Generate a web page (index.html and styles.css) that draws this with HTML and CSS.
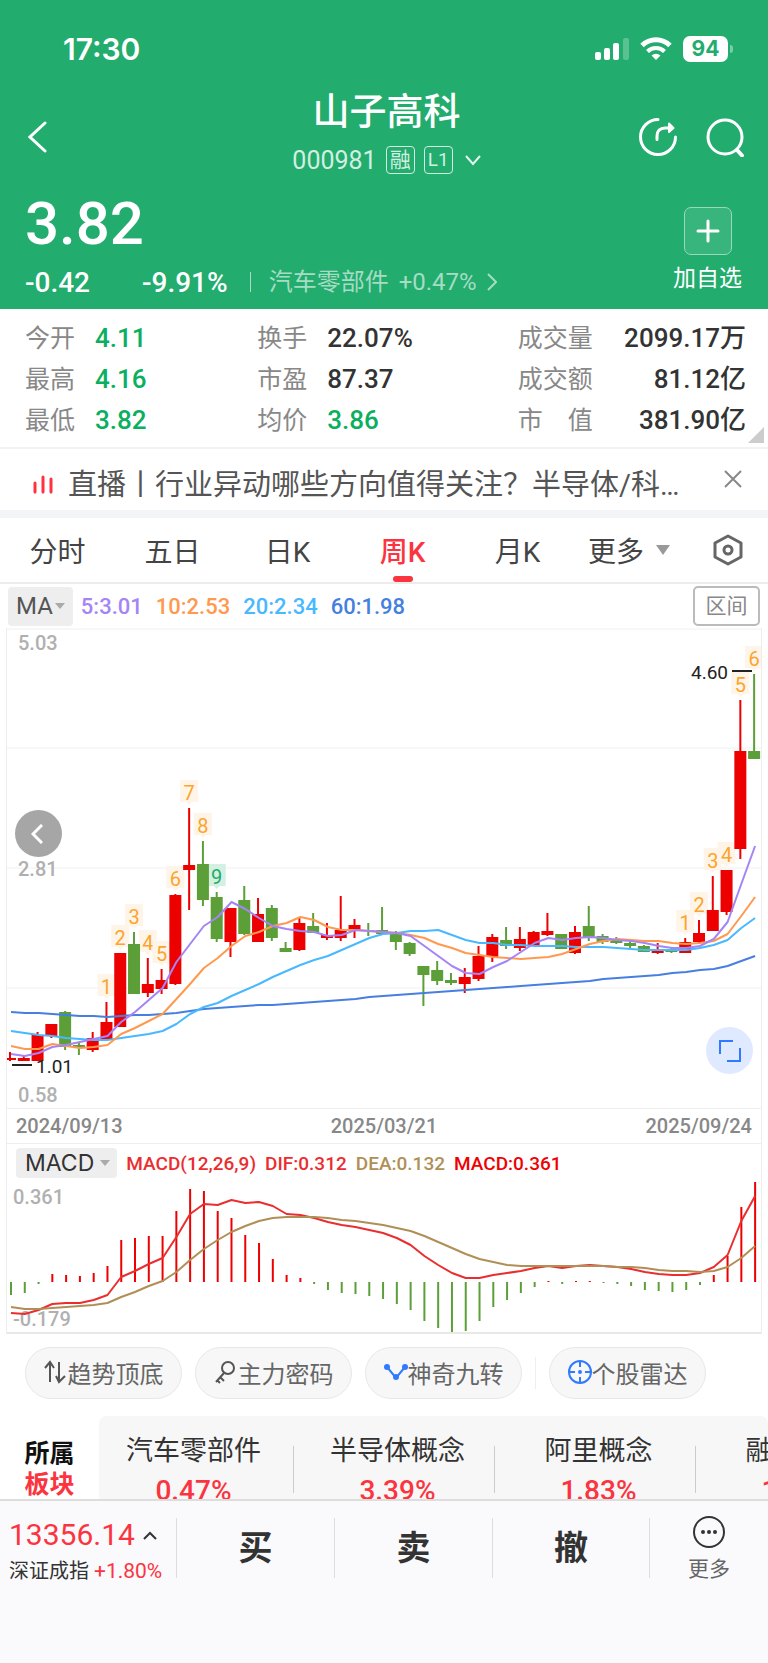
FILE: index.html
```html
<!doctype html>
<html lang="zh-CN">
    <head>
        <title>山子高科 000981</title>
        <meta charset="UTF-8">
        <meta name="viewport" content="width=device-width, initial-scale=1">
        <link rel="stylesheet" href="styles.css">
        <script defer src="chart.js"></script>
    </head>

    <body>
        <!--Header Start-->
        <header class="header">
            <div class="statusbar">
                <span class="clock">17:30</span>
                <div class="status-icons">
                    <svg width="34" height="24" viewBox="0 0 34 24" fill="#fff">
                        <rect x="0" y="15" width="6" height="8" rx="2"/>
                        <rect x="9" y="11" width="6" height="12" rx="2"/>
                        <rect x="18" y="6" width="6" height="17" rx="2"/>
                        <rect x="28" y="1" width="6" height="22" rx="2" opacity="0.25"/>
                    </svg>
                    <svg width="32" height="24" viewBox="0 0 32 24" fill="none" stroke="#fff" stroke-width="5">
                        <path d="M2 8.500a19.800 19.800 0 0 1 28 0"/>
                        <path d="M7.500 14.500a12 12 0 0 1 17 0" stroke-width="4"/>
                        <path d="M11.500 18.500a6.400 6.400 0 0 1 9 0L16 23z" fill="#fff" stroke="none"/>
                    </svg>
                    <div class="battery">94</div>
                </div>
            </div>

            <div class="titlebar">
                <button class="icon-btn back" aria-label="返回">
                    <svg width="20" height="32" viewBox="0 0 20 32" fill="none" stroke="#fff" stroke-width="3" stroke-linecap="round"><path d="M17 2 2 16l15 14"/></svg>
                </button>
                <div class="title">
                    <h1>山子高科</h1>
                    <p class="code">
                        <span>000981</span>
                        <span class="badge">融</span>
                        <span class="badge badge-level">L1</span>
                        <svg width="16" height="11" viewBox="0 0 16 11" fill="none" stroke="#e3f5ec" stroke-width="2"><path d="M1 1l7 8 7-8"/></svg>
                    </p>
                </div>
                <div class="title-actions">
                    <button class="icon-btn" aria-label="分享">
                        <svg width="40" height="40" viewBox="-20 -20 40 40" fill="none" stroke="#fff" stroke-width="3" stroke-linecap="round">
                            <path d="M0-17.500A17.500 17.500 0 1 0 17.500 0"/>
                            <path d="M-1 2.500V-1C-1-6 2-9 7-9h6"/>
                            <path d="M11-13.500 15.500-9 11-5z" fill="#fff" stroke-width="2" stroke-linejoin="round"/>
                        </svg>
                    </button>
                    <button class="icon-btn" aria-label="搜索">
                        <svg width="40" height="40" viewBox="-20 -20 40 40" fill="none" stroke="#fff" stroke-width="3" stroke-linecap="round">
                            <circle r="17"/>
                            <path d="M12 13l5 5.500" stroke-width="4"/>
                        </svg>
                    </button>
                </div>
            </div>

            <div class="quote">
                <div>
                    <div class="price">3.82</div>
                    <div class="change">
                        <span class="diff">-0.42</span>
                        <span>-9.91%</span>
                        <a class="industry" href="#">汽车零部件 <span>+0.47%</span>
                            <svg width="10" height="18" viewBox="0 0 10 18" fill="none" stroke="currentColor" stroke-width="2"><path d="M1 1l8 8-8 8"/></svg>
                        </a>
                    </div>
                </div>
                <button class="add">
                    <span class="plus"><svg width="24" height="24" viewBox="0 0 24 24" stroke="#fff" stroke-width="3" stroke-linecap="round"><path d="M2 12h20M12 2v20"/></svg></span>
                    加自选
                </button>
            </div>
        </header>
        <!--Header End-->

        <!--Stats Start-->
        <section class="stats">
            <dl>
                <dt>今开</dt><dd class="down">4.11</dd>
                <dt>最高</dt><dd class="down">4.16</dd>
                <dt>最低</dt><dd class="down">3.82</dd>
            </dl>
            <dl>
                <dt>换手</dt><dd>22.07%</dd>
                <dt>市盈</dt><dd>87.37</dd>
                <dt>均价</dt><dd class="down">3.86</dd>
            </dl>
            <dl class="wide">
                <dt>成交量</dt><dd>2099.17万</dd>
                <dt>成交额</dt><dd>81.12亿</dd>
                <dt>市　值</dt><dd>381.90亿</dd>
            </dl>
            <span class="corner"></span>
        </section>
        <!--Stats End-->

        <div class="news">
            <svg width="20" height="20" viewBox="0 0 20 20" stroke="#fb3440" stroke-width="3" stroke-linecap="round"><path d="M2 8v9M10 2v15M18 4v13"/></svg>
            <a href="#">直播丨行业异动哪些方向值得关注？半导体/科…</a>
            <button class="icon-btn close" aria-label="关闭">
                <svg width="18" height="18" viewBox="0 0 18 18" stroke="#888" stroke-width="2"><path d="M1 1l16 16M17 1 1 17"/></svg>
            </button>
        </div>

        <!--Tabs Start-->
        <nav class="tabs">
            <button>分时</button>
            <button>五日</button>
            <button>日K</button>
            <button class="active">周K</button>
            <button>月K</button>
            <button class="more">更多<span class="caret"></span></button>
            <button aria-label="设置">
                <svg width="30" height="32" viewBox="0 0 30 32" fill="none" stroke="#666" stroke-width="3" stroke-linejoin="round"><path d="M15 2 28 9v14l-13 7L2 23V9z"/><circle cx="15" cy="16" r="4"/></svg>
            </button>
        </nav>
        <!--Tabs End-->

        <!--Chart Start-->
        <div class="ma">
            <button class="indicator">MA<span class="caret"></span></button>
            <span class="ma5">5:3.01</span>
            <span class="ma10">10:2.53</span>
            <span class="ma20">20:2.34</span>
            <span class="ma60">60:1.98</span>
            <button class="range">区间</button>
        </div>
        <section class="chart">
            <div class="kline">
                <svg id="kline" viewBox="7 0 754 480"></svg>
                <button class="float prev" aria-label="上一页">
                    <svg width="12" height="20" viewBox="0 0 12 20" fill="none" stroke="#fff" stroke-width="3"><path d="M11 1 2 10l9 9"/></svg>
                </button>
                <button class="float full" aria-label="全屏">
                    <svg width="22" height="22" viewBox="0 0 22 22" fill="none" stroke="#2e7bff" stroke-width="2"><path d="M1 14V1h13M21 8v13H8"/></svg>
                </button>
            </div>
            <div class="dates">
                <span>2024/09/13</span>
                <span>2025/03/21</span>
                <span>2025/09/24</span>
            </div>
            <div class="macd-head">
                <button class="indicator">MACD<span class="caret"></span></button>
                <span class="dif">MACD(12,26,9)</span>
                <span class="dif">DIF:0.312</span>
                <span class="dea">DEA:0.132</span>
                <span class="bar">MACD:0.361</span>
            </div>
            <svg id="macd" viewBox="7 0 754 154"></svg>
        </section>
        <!--Chart End-->

        <div class="tools">
            <button>
                <svg width="24" height="26" viewBox="0 0 24 26" fill="none" stroke="#555" stroke-width="2"><path d="M6 23V4M1 9l5-6 4 6M15 3v19M12 17l3 6 6-6"/></svg>趋势顶底
            </button>
            <button>
                <svg width="24" height="26" viewBox="0 0 24 26" fill="none" stroke="#555" stroke-width="2"><circle cx="14" cy="9" r="6"/><path d="M10 14 2 23M6 18l4 4M3 21l3 3"/></svg>主力密码
            </button>
            <button>
                <svg width="24" height="26" viewBox="0 0 24 26" fill="none" stroke="#2e7bff" stroke-width="2"><path d="M3 8l9 11 9-11"/><g fill="#2e7bff" stroke="none"><circle cx="3" cy="8" r="3"/><circle cx="12" cy="18" r="3"/><circle cx="21" cy="8" r="3"/></g></svg>神奇九转
            </button>
            <span class="line"></span>
            <button>
                <svg width="24" height="26" viewBox="0 0 24 26" fill="none" stroke="#2e7bff" stroke-width="2"><circle cx="12" cy="13" r="11"/><path d="M12 2v6M12 18v6M1 13h6M17 13h6"/><circle cx="12" cy="13" r="1"/></svg>个股雷达
            </button>
        </div>

        <section class="sectors">
            <h2>所属<br><span>板块</span></h2>
            <div class="sector-list">
                <a href="#">汽车零部件<b>0.47%</b></a>
                <a href="#">半导体概念<b>3.39%</b></a>
                <a href="#">阿里概念<b>1.83%</b></a>
                <a href="#">融资融券<b>1.15%</b></a>
            </div>
        </section>

        <!--Bottom Bar Start-->
        <footer class="bottom">
            <a class="index" href="#">
                <span class="points">13356.14
                    <svg width="14" height="9" viewBox="0 0 14 9" fill="none" stroke="#333" stroke-width="2"><path d="M1 8l6-6 6 6"/></svg>
                </span>
                <span class="name">深证成指 <b>+1.80%</b></span>
            </a>
            <button class="trade">买</button>
            <button class="trade">卖</button>
            <button class="trade">撤</button>
            <button class="menu">
                <svg width="34" height="34" viewBox="0 0 34 34" fill="none" stroke="#333" stroke-width="2"><circle cx="17" cy="17" r="15"/><g fill="#333" stroke="none"><circle cx="11" cy="17" r="2"/><circle cx="17" cy="17" r="2"/><circle cx="23" cy="17" r="2"/></g></svg>
                更多
            </button>
        </footer>
        <!--Bottom Bar End-->
    </body>
</html>
```

FILE: styles.css
```css
*{
    box-sizing: border-box;
}
body{
    margin: 0;
    font-family: Roboto, "Noto Sans CJK SC", sans-serif;
    background: #fff;
    color: #333;
}
h1, h2, p, dl, dd{
    margin: 0;
    font-weight: normal;
}
button{
    margin: 0;
    padding: 0;
    border: 0;
    background: none;
    font: inherit;
    color: inherit;
}
a{
    color: inherit;
    text-decoration: none;
}
svg{
    display: block;
    flex: none;
}
.caret{
    border: 5px solid transparent;
    border-top: 6px solid #aaa;
    border-bottom: 0;
}

/* Header */
.header{
    background: #22ac6e;
    color: #fff;
}
.statusbar{
    display: flex;
    justify-content: space-between;
    align-items: center;
    height: 88px;
    padding: 10px 35px 0 63px;
}
.clock{
    font: 600 30px Inter, sans-serif;
}
.status-icons{
    display: flex;
    align-items: center;
    gap: 11px;
}
.battery{
    position: relative;
    width: 45px;
    margin-right: 5px;
    border-radius: 7px;
    background: #fff;
    color: #22ac6e;
    font: 700 21px/26px Inter, sans-serif;
    text-align: center;
}
.battery::after{
    content: "";
    position: absolute;
    right: -5px;
    top: 9px;
    width: 3px;
    height: 8px;
    border-radius: 0 3px 3px 0;
    background: #7bcda8;
}
.titlebar{
    display: grid;
    grid-template-columns: 1fr auto 1fr;
    align-items: center;
    height: 94px;
    padding: 0 23px 0 28px;
}
.icon-btn{
    display: flex;
    align-items: center;
}
.titlebar .icon-btn{
    padding-top: 3px;
}
.title{
    text-align: center;
}
.title h1{
    font-size: 37px;
    line-height: 50px;
    font-weight: 500;
}
.code{
    display: flex;
    align-items: center;
    justify-content: center;
    gap: 9px;
    height: 44px;
    font-size: 25px;
    color: #d3efe2;
}
.badge{
    width: 29px;
    border: 1px solid #d3efe2;
    border-radius: 4px;
    font-size: 21px;
    line-height: 26px;
    text-align: center;
}
.badge-level{
    font-size: 19px;
}
.code svg{
    margin-left: 3px;
}
.title-actions{
    display: flex;
    justify-content: flex-end;
    gap: 27px;
}
.quote{
    display: flex;
    justify-content: space-between;
    height: 127px;
    padding: 0 26px 0 25px;
}
.price{
    font-size: 60px;
    line-height: 84px;
    font-weight: 500;
}
.change{
    display: flex;
    align-items: center;
    height: 32px;
    font-size: 28px;
    font-weight: 500;
}
.diff{
    width: 117px;
}
.industry{
    display: flex;
    align-items: center;
    gap: 10px;
    height: 20px;
    margin-left: 22px;
    padding-left: 18px;
    border-left: 1px solid #a6dcc4;
    font-size: 24px;
    line-height: 20px;
    font-weight: 400;
    color: #a6dcc4;
}
.add{
    display: flex;
    flex-direction: column;
    align-items: center;
    gap: 7px;
    padding-top: 25px;
    font-size: 23px;
    line-height: 34px;
}
.plus{
    display: flex;
    align-items: center;
    justify-content: center;
    width: 48px;
    height: 48px;
    border: 1px solid #9ad8bc;
    border-radius: 7px;
    background: #38b47d;
}

/* Stats */
.stats{
    position: relative;
    display: grid;
    grid-template-columns: 232fr 260fr 228fr;
    padding: 9px 22px 6px 25px;
    border-bottom: 2px solid #f2f2f2;
}
.stats dl{
    display: grid;
    grid-template-columns: 70px 1fr;
    line-height: 41px;
}
.stats dt{
    font-size: 25px;
    color: #888;
}
.stats dd{
    font-size: 26px;
    font-weight: 500;
}
.stats .wide{
    grid-template-columns: 80px 1fr;
}
.stats .wide dd{
    text-align: right;
}
.stats .down{
    color: #0aaf60;
}
.corner{
    position: absolute;
    right: 4px;
    bottom: 4px;
    border-left: 16px solid transparent;
    border-bottom: 16px solid #ccc;
}

/* News */
.news{
    display: flex;
    align-items: center;
    gap: 15px;
    height: 69px;
    padding: 11px 26px 0 33px;
    border-bottom: 8px solid #f2f4f8;
}
.news a{
    flex: 1;
    font-size: 29px;
    line-height: 40px;
    color: #555;
    white-space: nowrap;
}
.close{
    align-self: flex-start;
    height: 38px;
}

/* Tabs */
.tabs{
    display: grid;
    grid-template-columns: repeat(5, 115fr) 113fr 80fr;
    height: 66px;
    border-bottom: 2px solid #ececec;
    font-size: 28px;
    color: #444;
}
.tabs button{
    display: flex;
    align-items: center;
    justify-content: center;
}
.tabs .active{
    position: relative;
    color: #fb3440;
    font-weight: 500;
}
.tabs .active::after{
    content: "";
    position: absolute;
    bottom: 0;
    width: 20px;
    height: 6px;
    border-radius: 3px;
    background: #fb3440;
}
.tabs .more{
    justify-content: flex-start;
    gap: 12px;
    padding-left: 13px;
}
.tabs .caret{
    border-width: 10px 7px 0;
    border-top-color: #999;
}

/* MA row */
.ma{
    display: flex;
    align-items: center;
    gap: 13px;
    height: 44px;
    padding: 0 8px;
    font-size: 22px;
    font-weight: 500;
}
.indicator{
    display: flex;
    align-items: center;
    border-radius: 4px;
    background: #eee;
}
.ma .indicator{
    gap: 2px;
    height: 39px;
    margin-right: -5px;
    padding: 0 8px;
    font-size: 24px;
    font-weight: 400;
    color: #555;
}
.range{
    width: 67px;
    height: 40px;
    margin-left: auto;
    border: 2px solid #bbb;
    border-radius: 5px;
    font-size: 21px;
    line-height: 34px;
    font-weight: 400;
    color: #888;
}
.ma5{
    color: #a585f5;
}
.ma10{
    color: #ff994f;
}
.ma20{
    color: #48b9ff;
}
.ma60{
    color: #467fe0;
}

/* Chart */
.chart{
    margin: 0 6px;
    border: 1px solid #eee;
    border-top: 0;
    border-bottom: 2px solid #e8e8e8;
}
.chart > svg, .kline > svg{
    width: 100%;
}
.kline{
    position: relative;
}
.float{
    position: absolute;
    display: flex;
    align-items: center;
    justify-content: center;
    width: 47px;
    height: 47px;
    border-radius: 50%;
}
.prev{
    left: 1%;
    top: 38%;
    padding-right: 2px;
    background: #a6a6a6;
}
.full{
    right: 1%;
    bottom: 7%;
    background: #dfe9ff;
}
.grid{
    stroke: #f0f0f0;
    stroke-width: 1;
}
.axis{
    font-size: 20px;
    font-weight: 500;
    fill: #b0b0b0;
}
.mark{
    font-size: 19px;
    fill: #222;
}
.mark-line{
    stroke: #222;
    stroke-width: 2;
}
.up{
    fill: #ed0000;
    stroke: #ed0000;
}
.fall{
    fill: #5c9f38;
    stroke: #5c9f38;
}
.line-path{
    fill: none;
    stroke-width: 2;
    stroke-linejoin: round;
}
.flag{
    fill: #fff4e8;
}
.flag-text{
    font-size: 20px;
    fill: #fba42e;
    text-anchor: middle;
}
.flag.last{
    fill: #d3f0e2;
}
.flag-text.last{
    fill: #1eac68;
}
.dates{
    display: flex;
    justify-content: space-between;
    padding: 0 9px;
    border-top: 1px solid #eee;
    border-bottom: 1px solid #eee;
    font-size: 20px;
    line-height: 34px;
    font-weight: 500;
    color: #888;
}
.macd-head{
    display: flex;
    align-items: center;
    gap: 9px;
    height: 34px;
    padding-left: 9px;
    padding-top: 4px;
    font-size: 19px;
    font-weight: 500;
}
.macd-head .indicator{
    gap: 6px;
    height: 30px;
    padding: 0 7px 0 9px;
    font: 400 23px Inter, sans-serif;
}
.dif{
    color: #ea2e30;
}
.dea{
    color: #b08f56;
}
.bar{
    color: #f00000;
}

/* Tools */
.tools{
    display: flex;
    align-items: center;
    gap: 13px;
    padding: 13px 25px 17px;
}
.tools button{
    display: flex;
    align-items: center;
    justify-content: center;
    width: 157px;
    height: 52px;
    padding-bottom: 2px;
    border: 1px solid #e8e8e8;
    border-radius: 26px;
    background: #f7f7f7;
    font-size: 24px;
    color: #666;
}
.tools .line{
    width: 1px;
    height: 32px;
    background: #eee;
}

/* Sectors */
.sectors{
    display: flex;
    height: 83px;
    overflow: hidden;
}
.sectors h2{
    flex: none;
    width: 99px;
    padding-top: 22px;
    font-size: 25px;
    line-height: 31px;
    font-weight: 700;
    text-align: center;
    color: #111;
}
.sectors h2 span{
    color: #fb3440;
}
.sector-list{
    display: flex;
    flex: 1;
    overflow: hidden;
    border-radius: 8px 8px 0 0;
    background: #f7f7f7;
}
.sector-list a{
    position: relative;
    flex: 0 0 201px;
    padding: 15px 6px 0 0;
    font-size: 27px;
    line-height: 40px;
    text-align: center;
}
.sector-list a::after{
    content: "";
    position: absolute;
    right: 6px;
    top: 30px;
    width: 1px;
    height: 47px;
    background: #ccc;
}
.sector-list a:first-child{
    padding-right: 12px;
}
.sector-list b{
    display: block;
    font-size: 28px;
    font-weight: 500;
    color: #fb3440;
}

/* Bottom bar */
.bottom{
    display: grid;
    grid-template-columns: 176fr 158fr 158fr 158fr 118fr;
    align-items: center;
    padding: 7px 0 75px;
    border-top: 2px solid #ddd;
    background: #fafafc;
}
.index{
    display: flex;
    flex-direction: column;
    padding: 8px 0 0 9px;
    white-space: nowrap;
}
.points{
    display: flex;
    align-items: center;
    gap: 8px;
    font-size: 30px;
    line-height: 38px;
    color: #fb3440;
}
.name{
    font-size: 20px;
    line-height: 34px;
}
.name b{
    font-size: 21px;
    font-weight: 400;
    color: #fb3440;
}
.trade{
    height: 60px;
    border-left: 1px solid #ddd;
    font-size: 34px;
    line-height: 56px;
    font-weight: 700;
}
.trade:nth-last-child(2){
    border-right: 1px solid #ddd;
}
.menu{
    display: flex;
    flex-direction: column;
    align-items: center;
    gap: 7px;
    font-size: 21px;
    line-height: 26px;
    color: #666;
}
```

FILE: chart.js
```js
const STEP = 13.78;

// high, open/close top, open/close bottom, low, 1 = up / 0 = down
const candles = [
    [424,430,432,433,1],[428,430,433,433,1],[404,407,433,433,1],[396,396,408,410,1],
    [383,384,419,422,0],[415,417,420,427,0],[404,410,422,424,1],[374,394,411,411,1],
    [325,325,399,399,1],[304,316,366,366,0],[330,356,365,369,1],[341,352,361,366,1],
    [266,267,356,357,1],[180,237,242,282,1],[213,236,272,278,0],[264,269,311,314,0],
    [280,280,314,329,1],[258,272,306,307,0],[270,286,314,314,1],[277,280,310,313,0],
    [314,320,324,324,0],[289,295,322,323,1],[285,298,305,305,0],[295,307,310,312,1],
    [268,302,310,313,1],[291,297,302,310,1],[295,302,303,308,0],[279,302,306,306,0],
    [303,304,314,322,0],[314,315,326,328,0],[338,338,347,378,0],[333,342,353,357,0],
    [345,352,355,357,0],[340,349,356,365,1],[318,328,351,353,1],[306,309,329,334,1],
    [299,312,318,321,0],[299,311,320,323,1],[303,304,317,318,1],[285,303,307,308,1],
    [306,306,321,321,0],[298,304,325,326,1],[278,298,309,313,0],[306,308,314,316,0],
    [309,312,315,316,0],[313,315,318,320,0],[317,318,324,324,0],[315,321,325,326,1],
    [319,321,324,325,0],[310,314,325,325,1],[292,305,314,315,1],[248,282,303,303,1],
    [242,242,284,287,1],[72,123,221,231,1],[46,123,131,131,0]
];

const ma5 = [426,428,425,419,417,414,411,408,394,384,372,360,334,316,298,289,274,281,290,298,301,303,304,308,307,302,303,304,305,308,318,328,338,345,346,339,333,324,315,310,312,310,309,310,312,313,315,318,320,320,318,311,294,256,218];
const ma10 = [418,421,421,416,418,420,419,417,406,400,393,386,371,356,340,330,318,308,304,298,295,289,292,299,302,302,303,304,305,307,310,316,320,325,327,329,330,331,330,329,326,321,316,313,311,312,313,313,315,316,315,313,306,288,269];
const ma20 = [403,405,407,408,410,411,412,412,410,408,406,403,396,386,379,375,368,362,356,349,343,337,332,328,322,316,310,306,305,303,303,302,307,312,315,315,317,317,318,318,318,319,319,319,320,321,322,322,322,322,320,317,312,300,290];
const ma60 = [384,385,385,386,387,388,388,389,388,387,387,386,385,383,381,380,379,378,377,377,376,375,374,373,372,371,369,368,367,366,365,364,363,362,361,360,359,358,357,356,355,354,353,351,350,349,348,347,345,344,342,341,338,333,328];

const bars = [117,115,106,96,97,98,95,88,62,60,58,58,33,11,13,33,40,57,65,81,97,100,106,112,115,116,118,121,126,132,143,150,154,153,143,129,122,115,109,103,106,103,103,105,106,108,112,113,114,112,107,97,78,29,4];
const dif = [135,136,132,126,125,125,122,117,99,93,86,80,59,36,26,27,22,25,24,28,36,37,40,44,47,49,52,55,60,67,78,87,95,100,100,97,95,93,90,88,90,88,87,88,89,91,94,96,97,97,95,89,77,43,18];
const dea = [129,131,131,130,129,128,127,125,119,114,108,103,94,82,71,62,54,48,43,40,39,39,39,40,42,43,45,47,50,53,58,64,70,76,81,84,87,88,88,88,88,88,88,88,89,89,90,92,93,93,94,93,89,80,68];

// nine-turn counters: candle index -> number
const flags = {7:1, 8:2, 9:3, 10:4, 11:5, 12:6, 13:7, 14:8, 15:9, 49:1, 50:2, 51:3, 52:4, 53:5, 54:6};

function x(i, start){
    return start + i * STEP;
}

function line(data, color){
    const points = data.map((y, i) => x(i, 11).toFixed(1) + ',' + y).join(' ');
    return `<polyline class="line-path" stroke="${color}" points="${points}"/>`;
}

function drawKline(){
    let out = '';
    [1, 120, 240, 360].forEach(y => {
        out += `<path class="grid" d="M7 ${y}H761"/>`;
    });
    out += '<text class="axis" x="18" y="22">5.03</text>';
    out += '<text class="axis" x="18" y="248">2.81</text>';
    out += '<text class="axis" x="18" y="474">0.58</text>';

    for (const i in flags) {
        const cx = x(i, 10);
        const top = candles[i][0];
        const last = flags[i] === 9 ? ' last' : '';
        out += `<path class="flag${last}" d="M${cx - 9} ${top - 28}h18v22h-6l-3 3-3-3h-6z"/>`;
        out += `<text class="flag-text${last}" x="${cx}" y="${top - 8}">${flags[i]}</text>`;
    }

    candles.forEach((c, i) => {
        const cx = x(i, 10);
        out += `<g class="${c[4] ? 'up' : 'fall'}">`;
        out += `<path stroke-width="2" d="M${cx} ${c[0]}V${c[3]}"/>`;
        out += `<rect stroke="none" x="${cx - 6}" y="${c[1]}" width="12" height="${c[2] - c[1]}"/></g>`;
    });

    out += line(ma60, '#467fe0') + line(ma20, '#48b9ff') + line(ma10, '#ff994f') + line(ma5, '#a585f5');
    out += '<path class="mark-line" d="M12 437H32M732 43h20"/>';
    out += '<text class="mark" x="36" y="445">1.01</text>';
    out += '<text class="mark" x="691" y="51">4.60</text>';
    document.getElementById('kline').innerHTML = out;
}

function drawMacd(){
    const zero = 104;
    let out = '<text class="axis" x="13" y="26">0.361</text>';
    out += '<text class="axis" x="13" y="148">-0.179</text>';
    bars.forEach((y, i) => {
        out += `<path class="${y < zero ? 'up' : 'fall'}" stroke-width="2" d="M${x(i, 11)} ${zero}V${y}"/>`;
    });
    out += line(dif, '#ea2e30') + line(dea, '#b08f56');
    document.getElementById('macd').innerHTML = out;
}

drawKline();
drawMacd();
```
